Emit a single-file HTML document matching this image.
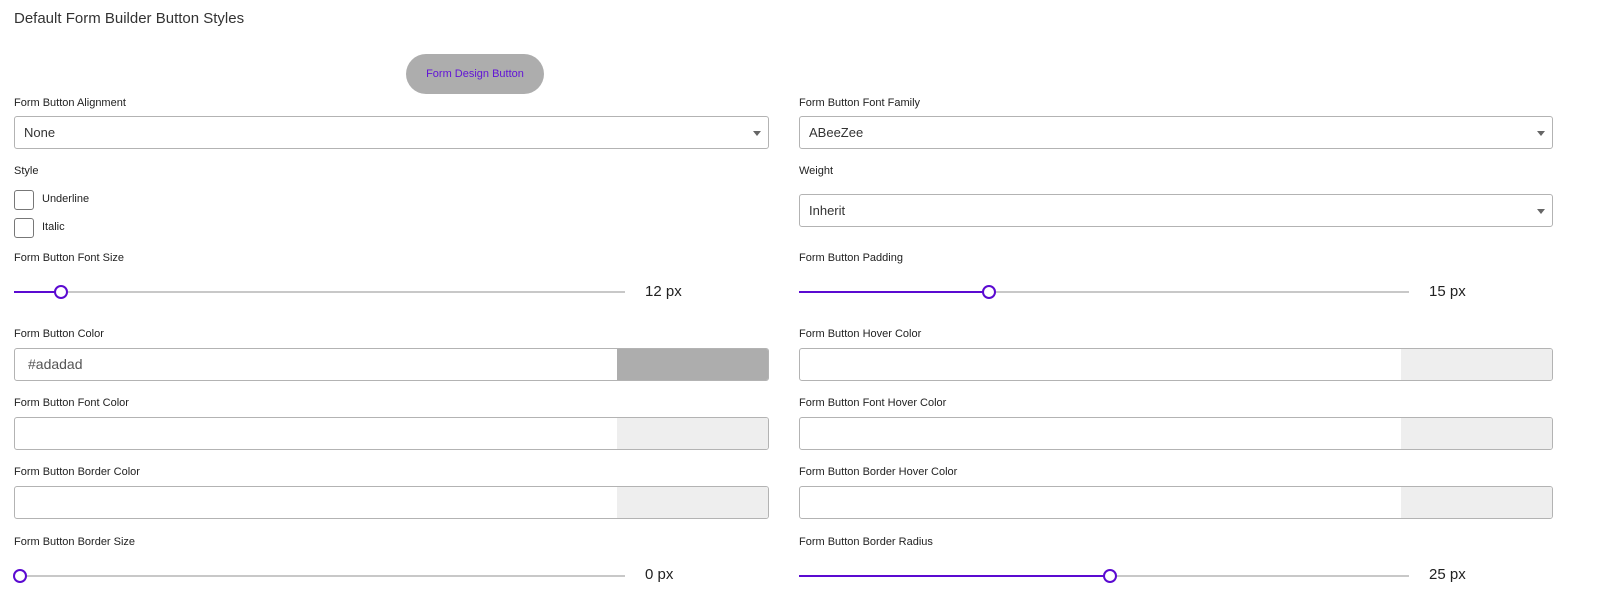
<!DOCTYPE html>
<html><head><meta charset="utf-8"><style>
*{box-sizing:border-box;margin:0;padding:0}
body{width:1610px;height:613px;background:#fff;font-family:"Liberation Sans",sans-serif;color:#222;position:relative;overflow:hidden}
.a{position:absolute}
.lbl{position:absolute;font-size:11px;color:#222;line-height:14px}
.sel{position:absolute;height:33px;border:1px solid #b3b3b3;border-radius:3px;font-size:13px;color:#333;padding-left:9px;line-height:31px}
.sel:after{content:"";position:absolute;right:7px;top:14px;border-left:4px solid transparent;border-right:4px solid transparent;border-top:5px solid #666}
.inp{position:absolute;height:33px;border:1px solid #b3b3b3;border-radius:3px;overflow:hidden;font-size:14px;color:#555;padding-left:13px;line-height:31px}
.sw{position:absolute;top:0;bottom:0;width:151px;right:0;background:#eee}
.cb{position:absolute;width:20px;height:20px;border:1px solid #777;border-radius:3px;left:14px}
.trk{position:absolute;height:2px;background:#c8c8c8}
.fill{position:absolute;height:2px;background:#5b0ad1}
.th{position:absolute;width:14px;height:14px;border:2px solid #5b0ad1;border-radius:50%;background:#fff}
.val{position:absolute;font-size:15px;color:#222;line-height:18px}
</style></head><body>
<div class="a" style="left:14px;top:10px;font-size:15px;color:#333">Default Form Builder Button Styles</div>
<div class="a" style="left:406px;top:54px;width:138px;height:40px;border-radius:20px;background:#adadad;color:#6214d6;font-size:11px;text-align:center;line-height:40px">Form Design Button</div>

<div class="lbl" style="left:14px;top:96px">Form Button Alignment</div>
<div class="sel" style="left:14px;top:116px;width:755px">None</div>
<div class="lbl" style="left:799px;top:96px">Form Button Font Family</div>
<div class="sel" style="left:799px;top:116px;width:754px">ABeeZee</div>

<div class="lbl" style="left:14px;top:164px">Style</div>
<div class="cb" style="top:190px"></div><div class="lbl" style="left:42px;top:192px">Underline</div>
<div class="cb" style="top:218px"></div><div class="lbl" style="left:42px;top:220px">Italic</div>
<div class="lbl" style="left:799px;top:164px">Weight</div>
<div class="sel" style="left:799px;top:194px;width:754px">Inherit</div>

<div class="lbl" style="left:14px;top:251px">Form Button Font Size</div>
<div class="trk" style="left:14px;width:611px;top:291px"></div>
<div class="fill" style="left:14px;width:47px;top:291px"></div>
<div class="th" style="left:54px;top:285px"></div>
<div class="val" style="left:645px;top:283px">12 px</div>
<div class="lbl" style="left:799px;top:251px">Form Button Padding</div>
<div class="trk" style="left:799px;width:610px;top:291px"></div>
<div class="fill" style="left:799px;width:190px;top:291px"></div>
<div class="th" style="left:982px;top:285px"></div>
<div class="val" style="left:1429px;top:283px">15 px</div>

<div class="lbl" style="left:14px;top:327px">Form Button Color</div>
<div class="inp" style="left:14px;top:348px;width:755px">#adadad<div class="sw" style="background:#adadad"></div></div>
<div class="lbl" style="left:799px;top:327px">Form Button Hover Color</div>
<div class="inp" style="left:799px;top:348px;width:754px"><div class="sw"></div></div>

<div class="lbl" style="left:14px;top:396px">Form Button Font Color</div>
<div class="inp" style="left:14px;top:417px;width:755px"><div class="sw"></div></div>
<div class="lbl" style="left:799px;top:396px">Form Button Font Hover Color</div>
<div class="inp" style="left:799px;top:417px;width:754px"><div class="sw"></div></div>

<div class="lbl" style="left:14px;top:465px">Form Button Border Color</div>
<div class="inp" style="left:14px;top:486px;width:755px"><div class="sw"></div></div>
<div class="lbl" style="left:799px;top:465px">Form Button Border Hover Color</div>
<div class="inp" style="left:799px;top:486px;width:754px"><div class="sw"></div></div>

<div class="lbl" style="left:14px;top:535px">Form Button Border Size</div>
<div class="trk" style="left:14px;width:611px;top:575px"></div>
<div class="th" style="left:13px;top:569px"></div>
<div class="val" style="left:645px;top:566px">0 px</div>
<div class="lbl" style="left:799px;top:535px">Form Button Border Radius</div>
<div class="trk" style="left:799px;width:610px;top:575px"></div>
<div class="fill" style="left:799px;width:311px;top:575px"></div>
<div class="th" style="left:1103px;top:569px"></div>
<div class="val" style="left:1429px;top:566px">25 px</div>
</body></html>
